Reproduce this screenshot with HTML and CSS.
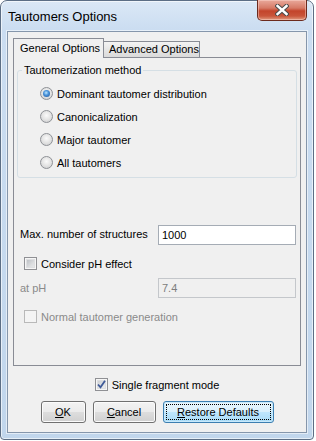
FILE: index.html
```html
<!DOCTYPE html>
<html>
<head>
<meta charset="utf-8">
<link rel="stylesheet" href="styles.css">
</head>
<body>
<div class="window">
  <div class="titlebar">
    <span class="title">Tautomers Options</span>
    <div class="close">
      <svg width="14" height="12" viewBox="0 0 14 12">
        <path d="M2.5 2 L11.5 10 M11.5 2 L2.5 10" stroke="#4a4a4a" stroke-width="4.4" stroke-linecap="square"/>
        <path d="M2.5 2 L11.5 10 M11.5 2 L2.5 10" stroke="#ffffff" stroke-width="2.4" stroke-linecap="square"/>
      </svg>
    </div>
  </div>
  <div class="client">
    <div class="tabs">
      <div class="tabstrip">
        <div class="tab active">General Options</div>
        <div class="tab">Advanced Options</div>
      </div>
      <div class="panel">
        <fieldset class="group">
          <legend>Tautomerization method</legend>
          <div class="radio-row"><span class="radio checked"></span><span>Dominant tautomer distribution</span></div>
          <div class="radio-row"><span class="radio"></span><span>Canonicalization</span></div>
          <div class="radio-row"><span class="radio"></span><span>Major tautomer</span></div>
          <div class="radio-row"><span class="radio"></span><span>All tautomers</span></div>
        </fieldset>
        <div class="field-row max-row">
          <span class="label">Max. number of structures</span>
          <div class="input">1000</div>
        </div>
        <div class="check-row ph-row"><span class="check"></span><span>Consider pH effect</span></div>
        <div class="field-row at-row disabled">
          <span class="label">at pH</span>
          <div class="input">7.4</div>
        </div>
        <div class="check-row normal-row disabled"><span class="check"></span><span>Normal tautomer generation</span></div>
      </div>
    </div>
    <div class="check-row single-row">
      <span class="check checked">
        <svg width="11" height="11" viewBox="0 0 11 11"><path d="M2 5.5 L4.5 8.3 L9 1.8" fill="none" stroke="#3f5a98" stroke-width="1.8"/></svg>
      </span>
      <span>Single fragment mode</span>
    </div>
    <div class="buttons">
      <div class="btn ok"><span><u>O</u>K</span></div>
      <div class="btn cancel"><span><u>C</u>ancel</span></div>
      <div class="btn restore default"><span class="focus"><u>R</u>estore Defaults</span></div>
    </div>
  </div>
</div>
</body>
</html>
```
FILE: styles.css
```css
* { box-sizing: border-box; }
html, body { margin: 0; padding: 0; }
body {
  width: 316px;
  height: 441px;
  overflow: hidden;
  background: #ffffff;
  font-family: "Liberation Sans", Arial, sans-serif;
  font-size: 11px;
  color: #000;
}
.window {
  width: 314px;
  height: 440px;
  display: flex;
  flex-direction: column;
  border: 1px solid #5c6e85;
  border-radius: 7px 7px 4px 4px;
  background: linear-gradient(#dbe8f6 0px, #cbddf1 28px, #c1d6ec 100%);
  box-shadow: inset 0 0 0 1px rgba(255,255,255,0.6);
}
.titlebar {
  height: 30px;
  flex: none;
  display: flex;
  justify-content: space-between;
  align-items: flex-start;
  padding: 0 6px 0 7px;
}
.title {
  font-size: 13px;
  line-height: 15px;
  margin-top: 8px;
  color: #000;
}
.close {
  width: 50px;
  height: 21px;
  margin-top: -1px;
  border: 1px solid #6b2a1e;
  border-top: 0;
  border-radius: 0 0 5px 5px;
  background: linear-gradient(#e9a99b 0%, #d67a66 40%, #c3442b 55%, #c9553a 80%, #e09a80 100%);
  box-shadow: inset 0 0 0 1px rgba(255,220,210,0.45);
  display: flex;
  align-items: center;
  justify-content: center;
}
.close svg { display: block; }
.client {
  flex: 1;
  display: flex;
  flex-direction: column;
  margin: 0 6px 6px 6px;
  border: 1px solid #8596ab;
  background: #f0f0f0;
  padding: 6px 5px 9px 5px;
  box-shadow: 0 0 0 1px rgba(255,255,255,0.55);
}
.tabs {
  flex: 1;
  display: flex;
  flex-direction: column;
}
.tabstrip {
  height: 19px;
  flex: none;
  display: flex;
  align-items: flex-end;
  position: relative;
  z-index: 1;
}
.tab {
  height: 16px;
  width: 97px;
  margin-left: -1px;
  border: 1px solid #898c95;
  border-bottom: 0;
  padding: 1px 0 0 5px;
  line-height: 13px;
  white-space: nowrap;
  background: linear-gradient(#f3f3f3, #e6e6e6 50%, #dadada);
}
.tab.active {
  height: 20px;
  width: 91px;
  margin-left: 0;
  margin-bottom: -1px;
  padding: 3px 0 0 6px;
  background: #f0f0f0;
}
.panel {
  flex: 1;
  display: flex;
  flex-direction: column;
  border: 1px solid #898c95;
  background: #f0f0f0;
}
.group {
  margin: 6px 3px 0 3px;
  padding: 0 0 3px 4px;
  border: 1px solid #d5dfe5;
  border-radius: 3px;
  min-width: 0;
}
.group legend {
  padding: 0 2px;
  line-height: 13px;
  font-size: 11px;
}
.radio-row {
  height: 23px;
  display: flex;
  align-items: center;
  padding-left: 18px;
  gap: 4px;
}
.radio-row:first-of-type { margin-top: 5px; }
.radio {
  width: 13px;
  height: 13px;
  flex: none;
  border-radius: 50%;
  border: 1px solid #8e9196;
  background: radial-gradient(circle at 50% 40%, #fafafa 0%, #e6e6e6 45%, #c9cacc 100%);
  display: flex;
  align-items: center;
  justify-content: center;
}
.radio.checked::after {
  content: "";
  width: 7px;
  height: 7px;
  border-radius: 50%;
  background: radial-gradient(circle at 45% 40%, #bfe8ff 0%, #4c95dc 40%, #1b4f93 100%);
}
.field-row {
  display: flex;
  align-items: center;
  height: 20px;
  margin: 0 4px 0 6px;
}
.field-row .label {
  width: 138px;
  flex: none;
  white-space: nowrap;
  margin-top: -3px;
}
.input {
  width: 138px;
  height: 20px;
  border: 1px solid #a5acb5;
  background: #fff;
  padding: 3px 0 0 3px;
  line-height: 13px;
}
.max-row { margin-top: 47px; }
.at-row { margin-top: 6px; }
.field-row.disabled .label { color: #8a8a8a; margin-top: -1px; }
.field-row.disabled .input {
  background: #f0f0f0;
  border-color: #c4c7cb;
  color: #7d7d7d;
}
.check-row {
  display: flex;
  align-items: center;
  height: 17px;
  gap: 4px;
  padding-left: 10px;
  white-space: nowrap;
}
.ph-row { margin-top: 10px; }
.normal-row { margin-top: 10px; }
.check {
  width: 13px;
  height: 13px;
  flex: none;
  border: 1px solid #8f9094;
  background: linear-gradient(135deg, #b1b5bb 0%, #dcdee0 60%, #eeeff0 100%);
  box-shadow: inset 0 0 0 1px #f6f6f6, inset 0 0 0 2px #dedfe1;
  display: flex;
  align-items: center;
  justify-content: center;
}
.check svg { display: block; }
.check-row.disabled { color: #8a8a8a; }
.check-row.disabled .check {
  border-color: #b9b9b9;
  background: #f4f4f4;
  box-shadow: none;
}
.single-row {
  justify-content: center;
  padding-left: 0;
  margin-top: 10px;
  flex: none;
}
.single-row .check {
  background: linear-gradient(135deg, #c4c8cd 0%, #e3e5e7 60%, #f0f1f2 100%);
}
.buttons {
  flex: none;
  display: flex;
  justify-content: center;
  gap: 7px;
  margin-top: 8px;
}
.btn {
  height: 22px;
  border: 1px solid #707070;
  border-radius: 3px;
  background: linear-gradient(#f3f3f3 0%, #ebebeb 48%, #dddddd 52%, #d0d0d0 100%);
  box-shadow: inset 0 0 0 1px #fbfbfb;
  display: flex;
  align-items: center;
  justify-content: center;
  line-height: 13px;
  padding: 2px;
}
.btn u { text-decoration: underline; text-underline-offset: 1px; }
.ok { width: 45px; }
.cancel { width: 63px; }
.restore { width: 111px; }
.btn.default {
  border-color: #3c7fb1;
  background: linear-gradient(#eaf6fd 0%, #d9f0fc 48%, #bee6fd 52%, #a9dbf6 100%);
  box-shadow: inset 0 0 0 1px #c8e9fb;
}
.focus {
  flex: 1;
  align-self: stretch;
  border: 1px dotted #000;
  display: flex;
  align-items: center;
  justify-content: center;
}
```
